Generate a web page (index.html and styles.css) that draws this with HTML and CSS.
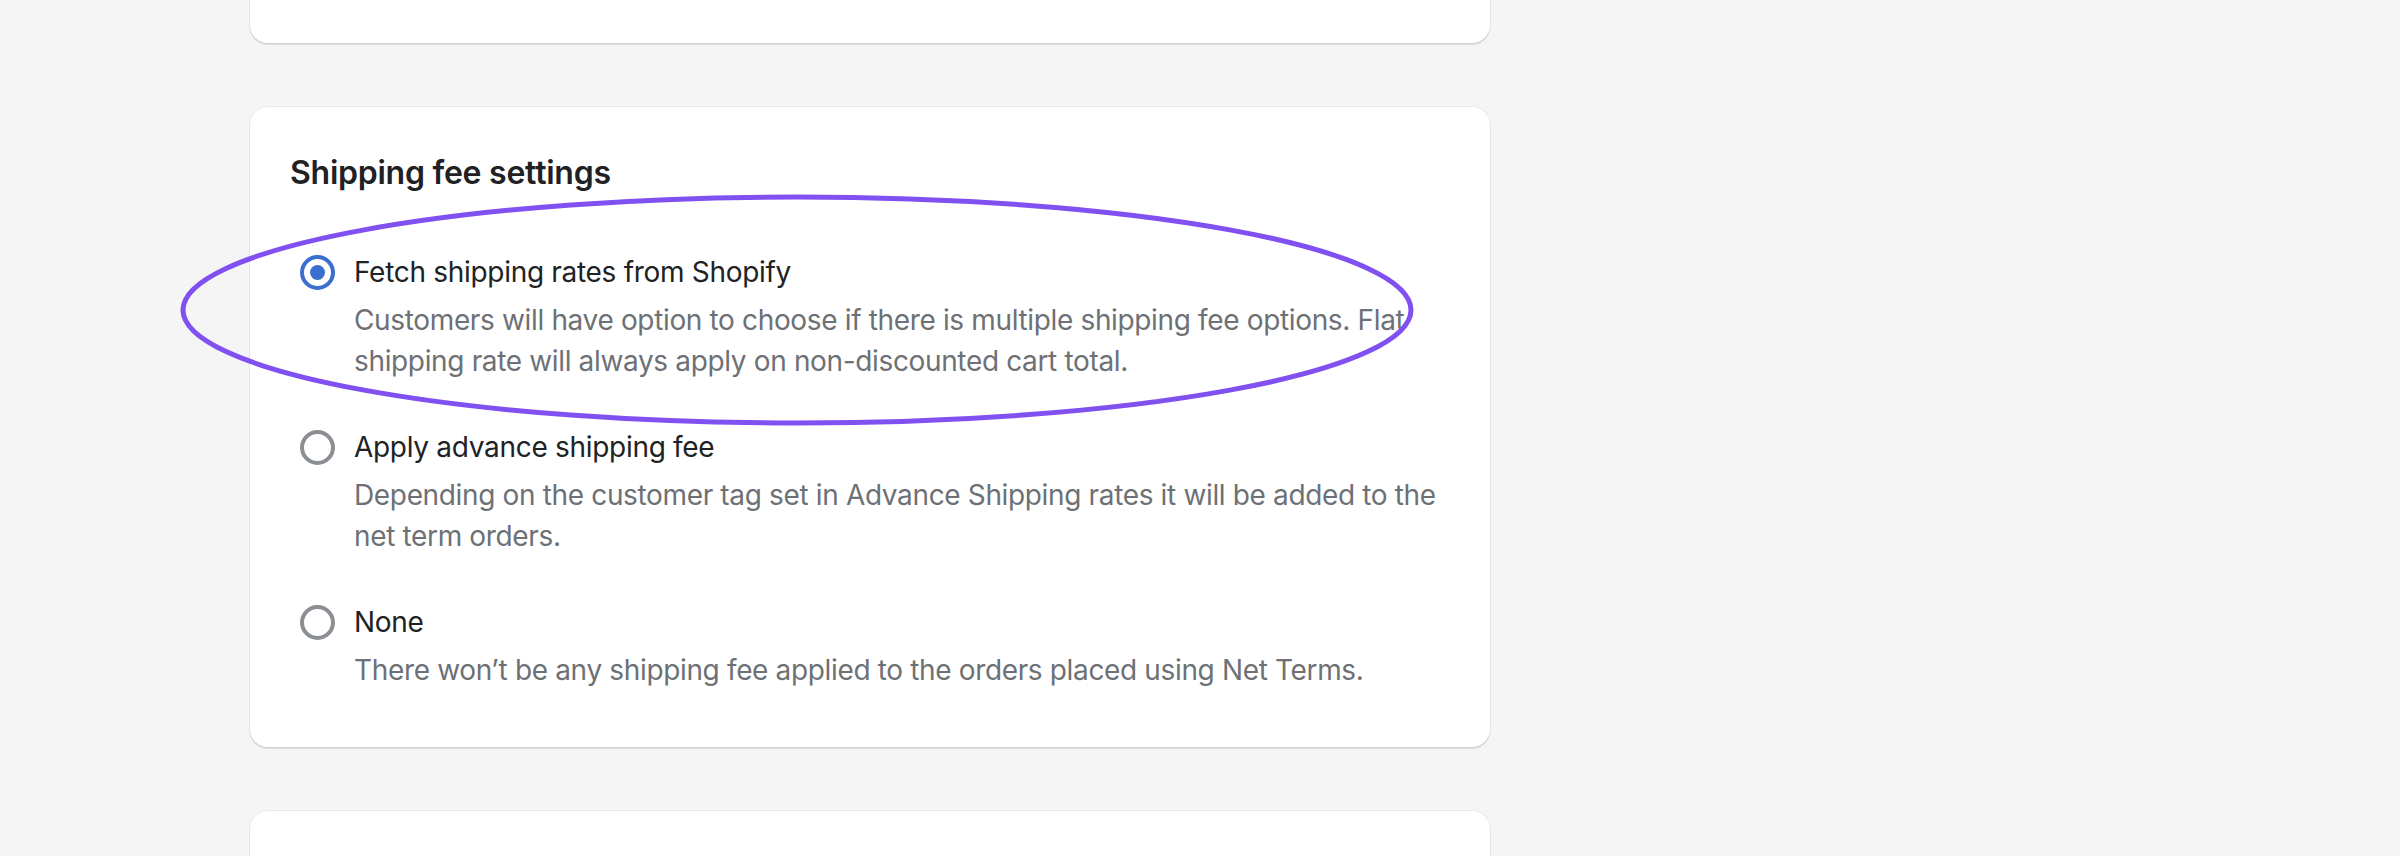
FILE: index.html
```html
<!DOCTYPE html>
<html lang="en">
<head>
<meta charset="utf-8">
<title>Shipping fee settings</title>
<link rel="stylesheet" href="styles.css">
</head>
<body>
<main class="page">
  <section class="card card-top"></section>
  <section class="card card-main">
    <h2 class="card-title">Shipping fee settings</h2>
    <div class="options">
      <label class="option">
        <span class="radio radio-checked"><span class="radio-dot"></span></span>
        <span class="option-text">
          <span class="option-label">Fetch shipping rates from Shopify</span>
          <span class="option-help">Customers will have option to choose if there is multiple shipping fee options. Flat shipping rate will always apply on non-discounted cart total.</span>
        </span>
      </label>
      <label class="option">
        <span class="radio"></span>
        <span class="option-text">
          <span class="option-label">Apply advance shipping fee</span>
          <span class="option-help">Depending on the customer tag set in Advance Shipping rates it will be added to the net term orders.</span>
        </span>
      </label>
      <label class="option">
        <span class="radio"></span>
        <span class="option-text">
          <span class="option-label">None</span>
          <span class="option-help">There won’t be any shipping fee applied to the orders placed using Net Terms.</span>
        </span>
      </label>
    </div>
  </section>
  <section class="card card-bottom"></section>
</main>
<svg class="annotation" width="2400" height="856" viewBox="0 0 2400 856" aria-hidden="true">
  <ellipse cx="797" cy="310" rx="614" ry="113" fill="none" stroke="#8150f0" stroke-width="5"/>
</svg>
</body>
</html>
```
FILE: styles.css
```css
* { box-sizing: border-box; }
html, body {
  margin: 0;
  padding: 0;
  width: 2400px;
  height: 856px;
  overflow: hidden;
  background: #f5f5f5;
  font-family: Inter, "Noto Sans", "Liberation Sans", sans-serif;
  -webkit-font-smoothing: antialiased;
}
.page {
  display: flex;
  flex-direction: column;
  gap: 64px;
  padding-left: 250px;
  width: 1490px;
}
.card {
  background: #ffffff;
  width: 1240px;
  border-radius: 18px;
  box-shadow: 0 2px 1px rgba(0, 0, 0, 0.10), 0 0 0 1px rgba(0, 0, 0, 0.05);
}
.card-top {
  height: 43px;
  border-radius: 0 0 18px 18px;
}
.card-bottom {
  height: 200px;
  border-radius: 18px 18px 0 0;
}
.card-main {
  padding: 42px 40px 56px 40px;
}
.card-title {
  margin: 0;
  font-size: 32px;
  line-height: 48px;
  font-weight: 600;
  color: #1f2124;
  letter-spacing: -0.25px;
}
.options {
  margin-top: 55px;
  display: flex;
  flex-direction: column;
  gap: 45px;
}
.option {
  display: flex;
  align-items: flex-start;
  gap: 19px;
  padding-left: 10px;
}
.radio {
  flex: 0 0 auto;
  width: 35px;
  height: 35px;
  margin-top: 3px;
  border-radius: 50%;
  border: 4px solid #8b8f94;
  display: flex;
  align-items: center;
  justify-content: center;
  background: #fff;
}
.radio-checked {
  border-color: #3b6fcf;
}
.radio-dot {
  width: 15px;
  height: 15px;
  border-radius: 50%;
  background: #3b6fcf;
}
.option-text {
  display: flex;
  flex-direction: column;
  gap: 8px;
  width: 1096px;
}
.option-label {
  font-size: 28px;
  line-height: 40px;
  color: #202223;
  letter-spacing: -0.3px;
}
.option-help {
  font-size: 28px;
  line-height: 41px;
  color: #6d7175;
  letter-spacing: -0.35px;
}
.annotation {
  position: absolute;
  left: 0;
  top: 0;
  pointer-events: none;
}
```
